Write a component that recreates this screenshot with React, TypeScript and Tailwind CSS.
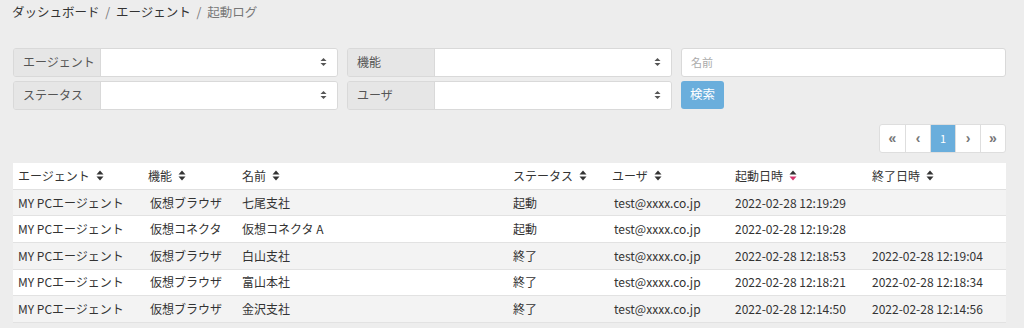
import React from "react";

const font = { fontFamily: '"Noto Sans CJK JP", "Noto Sans", sans-serif' };

function SortIcon({ active }: { active?: boolean }) {
  return (
    <svg width="8" height="11" viewBox="0 0 8 11" className="ml-[6px] inline-block">
      <path d="M4 0.5 L7.5 4.5 L0.5 4.5 Z" fill="#333" />
      <path d="M4 10.5 L7.5 6.5 L0.5 6.5 Z" fill={active ? "#d6336c" : "#333"} />
    </svg>
  );
}

function SelectArrow() {
  return (
    <svg width="7" height="10" viewBox="0 0 7 10">
      <path d="M3.5 1 L6.5 4 L0.5 4 Z" fill="#555" />
      <path d="M3.5 9 L6.5 6 L0.5 6 Z" fill="#555" />
    </svg>
  );
}

function Field({ label }: { label: string }) {
  return (
    <div className="flex h-[29px] w-[325px] rounded-[3px] border border-[#d9d9d9] overflow-hidden">
      <div className="w-[87px] shrink-0 bg-[#e6e6e6] border-r border-[#d9d9d9] flex items-center pl-[9px] text-[12px] text-[#555]">
        {label}
      </div>
      <div className="flex-1 bg-white flex items-center justify-end pr-[10px]">
        <SelectArrow />
      </div>
    </div>
  );
}

const cols = "grid-cols-[130px_94px_271px_99px_123px_137px_139px]";

const rows = [
  ["MY PCエージェント", "仮想ブラウザ", "七尾支社", "起動", "test@xxxx.co.jp", "2022-02-28 12:19:29", ""],
  ["MY PCエージェント", "仮想コネクタ", "仮想コネクタ A", "起動", "test@xxxx.co.jp", "2022-02-28 12:19:28", ""],
  ["MY PCエージェント", "仮想ブラウザ", "白山支社", "終了", "test@xxxx.co.jp", "2022-02-28 12:18:53", "2022-02-28 12:19:04"],
  ["MY PCエージェント", "仮想ブラウザ", "富山本社", "終了", "test@xxxx.co.jp", "2022-02-28 12:18:21", "2022-02-28 12:18:34"],
  ["MY PCエージェント", "仮想ブラウザ", "金沢支社", "終了", "test@xxxx.co.jp", "2022-02-28 12:14:50", "2022-02-28 12:14:56"],
];

const headers = ["エージェント", "機能", "名前", "ステータス", "ユーザ", "起動日時", "終了日時"];

export default function App() {
  return (
    <div style={font} className="w-[1024px] h-[328px] bg-[#ededed] text-[#333] overflow-hidden">
      <div className="pt-[3px] pl-[12px] text-[12.5px] text-[#333]">
        ダッシュボード <span className="text-[#777] mx-[3px]">/</span> エージェント{" "}
        <span className="text-[#777] mx-[3px]">/</span> <span className="text-[#777]">起動ログ</span>
      </div>

      <div className="mt-[26px] pl-[13px] flex gap-[9px]">
        <div className="flex flex-col gap-[4px]">
          <Field label="エージェント" />
          <Field label="ステータス" />
        </div>
        <div className="flex flex-col gap-[4px]">
          <Field label="機能" />
          <Field label="ユーザ" />
        </div>
        <div className="flex flex-col gap-[4px]">
          <div className="h-[29px] w-[325px] bg-white border border-[#d9d9d9] rounded-[3px] flex items-center pl-[9px] text-[11px] text-[#aaa]">
            名前
          </div>
          <button className="h-[28px] w-[43px] bg-[#6aaedc] rounded-[3px] text-white text-[12.5px]">検索</button>
        </div>
      </div>

      <div className="mt-[14px] pr-[18px] flex justify-end">
        <div className="flex h-[29px] border border-[#dedede] rounded-[3px] overflow-hidden bg-white text-[14px] font-bold text-[#777]">
          {["«", "‹", "1", "›", "»"].map((p, i) => (
            <div
              key={i}
              style={p === "1" ? undefined : { fontFamily: '"Liberation Sans", sans-serif' }}
              className={`w-[25px] flex items-center justify-center ${i > 0 ? "border-l border-[#dedede]" : ""} ${p === "1" ? "bg-[#6aaedc] text-white text-[11px] font-normal" : ""}`}
            >
              {p}
            </div>
          ))}
        </div>
      </div>

      <div className="mt-[10px] ml-[13px] w-[993px] text-[12px]">
        <div className={`grid ${cols} h-[27px] bg-white items-center border-b border-[#e0e0e0]`}>
          {headers.map((h, i) => (
            <div key={h} className="pl-[5px] flex items-center">
              {h}
              <SortIcon active={i === 5} />
            </div>
          ))}
        </div>
        {rows.map((r, ri) => (
          <div
            key={ri}
            className={`grid ${cols} h-[26.6px] items-center border-b border-[#e2e2e2] ${ri % 2 === 0 ? "bg-[#f3f3f3]" : "bg-white"}`}
          >
            {r.map((c, ci) => (
              <div key={ci} className={`pl-[5px] whitespace-nowrap ${ci === 1 ? "pl-[7px]" : ""} ${ci === 4 ? "pl-[7px]" : ""}`}>
                {c}
              </div>
            ))}
          </div>
        ))}
      </div>
    </div>
  );
}
